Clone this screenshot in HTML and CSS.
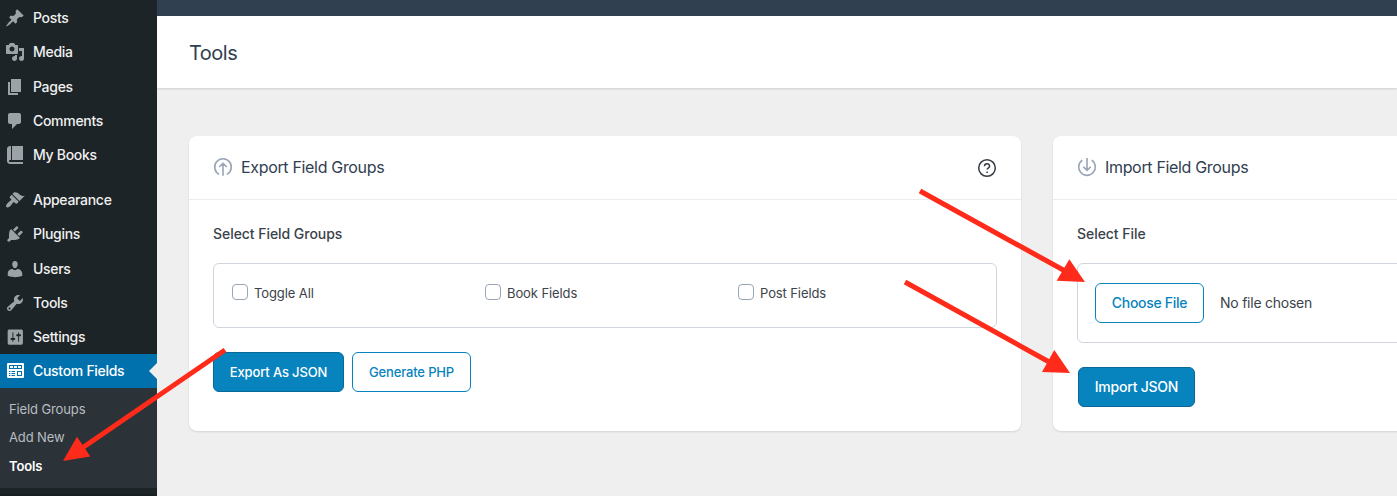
FILE: index.html
```html
<!DOCTYPE html>
<html lang="en">
<head>
<meta charset="utf-8">
<title>Tools</title>
<link rel="stylesheet" href="styles.css">
</head>
<body>
<div class="app">
  <nav class="sidebar">
    <ul class="menu">
      <li class="item"><svg class="icon" viewBox="0 0 20 20"><path d="M10.44 3.02l1.82-1.82 6.36 6.35-1.83 1.82c-1.05-.68-2.48-.57-3.41.36l-.75.75c-.92.93-1.04 2.35-.35 3.41l-1.83 1.82-2.41-2.41-2.8 2.79c-.42.42-3.38 2.71-3.8 2.29s1.86-3.39 2.28-3.81l2.79-2.79L4.1 9.36l1.83-1.82c1.05.69 2.48.57 3.4-.36l.75-.75c.93-.92 1.05-2.35.36-3.41z"/></svg><span>Posts</span></li>
      <li class="item"><svg class="icon" viewBox="0 0 20 20"><path d="M13 11V4c0-.55-.45-1-1-1h-1.67L9 1H5L3.67 3H2c-.55 0-1 .45-1 1v7c0 .55.45 1 1 1h10c.55 0 1-.45 1-1zM7 4.5c1.38 0 2.5 1.12 2.5 2.5S8.38 9.5 7 9.5 4.5 8.38 4.5 7 5.62 4.5 7 4.5zM14 6h5v10.5c0 1.38-1.12 2.5-2.5 2.5S14 17.88 14 16.5s1.12-2.5 2.5-2.5c.17 0 .34.02.5.05V9h-3V6zm-4 8.05V13h2v3.5c0 1.38-1.12 2.5-2.5 2.5S7 17.88 7 16.5 8.12 14 9.5 14c.17 0 .34.02.5.05z"/></svg><span>Media</span></li>
      <li class="item"><svg class="icon" viewBox="0 0 20 20"><path d="M6 15V2h10v13H6zm-1 1h8v2H3V5h2v11z"/></svg><span>Pages</span></li>
      <li class="item"><svg class="icon" viewBox="0 0 20 20"><path d="M5 2h9c1.1 0 2 .9 2 2v7c0 1.1-.9 2-2 2h-2l-5 5v-5H5c-1.1 0-2-.9-2-2V4c0-1.1.9-2 2-2z"/></svg><span>Comments</span></li>
      <li class="item"><svg class="icon" viewBox="0 0 20 20"><path d="M5 1h1v14H4.800c-.5 0-.8.400-.8.900s.3 1.100.8 1.100H18v2H5c-1.660 0-3-1.340-3-3V4c0-1.660 1.340-3 3-3zM7 1h11v14H7z"/></svg><span>My Books</span></li>
    </ul>
    <ul class="menu">
      <li class="item"><svg class="icon" viewBox="0 0 20 20"><path d="M14.48 11.06L7.41 3.99l1.5-1.5c.5-.56 2.3-.47 3.51.32 1.21.8 1.43 1.28 2.91 2.1 1.18.64 2.45 1.26 4.45.85zm-.71.71L6.7 4.7 4.93 6.47c-.39.39-.39 1.02 0 1.41l1.06 1.06c.39.39.39 1.03 0 1.42-.6.6-1.43 1.11-2.21 1.69-.35.26-.7.53-1.01.84C1.43 14.23.4 16.08 1.4 17.07c.99 1 2.84-.03 4.18-1.36.31-.31.58-.66.85-1.02.57-.78 1.08-1.61 1.69-2.21.39-.39 1.02-.39 1.41 0l1.06 1.06c.39.39 1.02.39 1.41 0z"/></svg><span>Appearance</span></li>
      <li class="item"><svg class="icon" viewBox="0 0 20 20"><path d="M13.11 4.36L9.87 7.6 8 5.73l3.24-3.24c.35-.34 1.05-.2 1.56.32.52.51.66 1.21.31 1.55zm-8 1.77l.91-1.12 9.01 9.01-1.19.84c-.71.71-2.63 1.16-3.82 1.16H6.14L4.9 17.26c-.59.59-1.54.59-2.12 0-.59-.58-.59-1.53 0-2.12l1.24-1.24v-3.88c0-1.13.4-3.19 1.09-3.89zm7.26 3.97l3.24-3.24c.34-.35 1.04-.21 1.55.31.52.51.66 1.21.31 1.55l-3.24 3.25z"/></svg><span>Plugins</span></li>
      <li class="item"><svg class="icon" viewBox="0 0 20 20"><path d="M10 9.25c-2.27 0-2.73-3.44-2.73-3.44C7 4.02 7.82 2 9.97 2c2.16 0 2.98 2.02 2.71 3.81 0 0-.41 3.44-2.68 3.44zm0 1.950L12.720 10c2.39 0 4.52 2.33 4.52 4.53v2.49s-3.65 1.13-7.24 1.13c-3.65 0-7.24-1.13-7.24-1.13v-2.49c0-2.25 1.94-4.48 4.47-4.48z"/></svg><span>Users</span></li>
      <li class="item"><svg class="icon" viewBox="0 0 20 20"><path d="M16.68 9.77c-1.34 1.34-3.3 1.67-4.95.99l-5.41 6.52c-.99.99-2.59.99-3.58 0s-.99-2.59 0-3.57l6.52-5.42c-.68-1.65-.35-3.61.99-4.95 1.28-1.28 3.12-1.62 4.72-1.06l-2.89 2.89 2.82 2.82 2.86-2.87c.53 1.58.18 3.39-1.08 4.65zM3.81 16.21c.4.39 1.04.39 1.43 0 .4-.4.4-1.04 0-1.43-.39-.4-1.03-.4-1.43 0-.39.39-.39 1.03 0 1.43z"/></svg><span>Tools</span></li>
      <li class="item"><svg class="icon" viewBox="-.8 -.6 21 21"><path d="M18 16V4c0-1.100-.4-2-1.500-2h-13C2.400 2 2 2.900 2 4v12c0 1.100.4 2 1.500 2h13c1.100 0 1.500-.9 1.500-2zM8 11h1c.55 0 1 .45 1 1s-.45 1-1 1H8v1.500c0 .28-.22.5-.5.5s-.5-.22-.5-.5V13H6c-.55 0-1-.45-1-1s.45-1 1-1h1V5.500c0-.28.22-.5.5-.5s.5.22.5.5V11zm5-2h-1c-.55 0-1-.45-1-1s.45-1 1-1h1V5.500c0-.28.22-.5.5-.5s.5.22.5.5V7h1c.55 0 1 .45 1 1s-.45 1-1 1h-1v5.500c0 .28-.22.5-.5.5s-.5-.22-.5-.5V9z"/></svg><span>Settings</span></li>
      <li class="item item-current"><svg class="icon" viewBox="0 0 20 20"><path fill-rule="evenodd" d="M3 2h15q1 0 1 1v13q0 1-1 1H3q-1 0-1-1V3q0-1 1-1zM4 4v4h13V4zM4 10v1h1.500v-1zM6.500 10v1H10v-1zM4 12v1h1.500v-1zM6.500 12v1H10v-1zM4 14v1h1.500v-1zM6.500 14v1H10v-1zM12 10v5h5v-5z"/><path d="M5 5h3v2H5zM9 5h3v2H9zM13 5h3v2h-3zM13 11h3v3h-3z"/></svg><span>Custom Fields</span></li>
    </ul>
    <ul class="submenu">
      <li>Field Groups</li>
      <li>Add New</li>
      <li class="sub-current">Tools</li>
    </ul>
    <div class="menu-end"></div>
  </nav>
  <main class="main">
    <div class="topbar"></div>
    <header class="page-head"><h1>Tools</h1></header>
    <div class="cards">
      <section class="card">
        <div class="card-head">
          <svg class="head-icon" viewBox="0 0 20 20"><path d="M6.200 17.400A8.300 8.300 0 1 1 13.800 17.400M10 18.800V6.500M6.300 10L10 6.300 13.700 10"/></svg>
          <h2>Export Field Groups</h2>
          <svg class="help" viewBox="0 0 20 20"><circle cx="10" cy="10" r="8.300"/><path d="M7.500 8.200C7.500 4.900 12.600 5 12.600 8c0 2-2.500 2.100-2.500 3.600M10.100 13.400v1.500"/></svg>
        </div>
        <div class="card-body">
          <h3>Select Field Groups</h3>
          <div class="box checks">
            <label><input type="checkbox"><span>Toggle All</span></label>
            <label><input type="checkbox"><span>Book Fields</span></label>
            <label><input type="checkbox"><span>Post Fields</span></label>
          </div>
          <div class="actions"><button class="btn btn-primary btn-export">Export As JSON</button><button class="btn btn-php">Generate PHP</button></div>
        </div>
      </section>
      <section class="card">
        <div class="card-head">
          <svg class="head-icon" viewBox="0 0 20 20"><path d="M5.300 3.200A8.300 8.300 0 1 0 14.700 3.200M10 1v12.300M6.300 9.700L10 13.400 13.700 9.700"/></svg>
          <h2>Import Field Groups</h2>
        </div>
        <div class="card-body">
          <h3>Select File</h3>
          <div class="box file"><button class="btn btn-file">Choose File</button><span class="file-name">No file chosen</span></div>
          <div class="actions actions-import"><button class="btn btn-primary btn-import">Import JSON</button></div>
        </div>
      </section>
    </div>
  </main>
</div>
<svg class="arrows" viewBox="0 0 1397 496">
  <path class="shaft" d="M920 191L1066 271.500M905 282L1051 363M225 350L80 449.500"/>
  <path class="tip" d="M1085 282L1069.300 259.300 1056.700 280.700zM1070 373L1054.300 350 1042 372zM63 461L77 436.700 90.300 456.500z"/>
</svg>
</body>
</html>
```

FILE: styles.css
```css
* { box-sizing: border-box; }
body { margin: 0; font-family: Inter, "Liberation Sans", sans-serif; background: #efefef; overflow: hidden; }
ul, h1, h2, h3 { margin: 0; padding: 0; list-style: none; }
.app { display: flex; height: 496px; overflow: hidden; }
.sidebar { width: 157px; flex: none; background: #1d2427; padding-top: 1.200px; display: flex; flex-direction: column; }
.menu + .menu { margin-top: 11px; }
.item { display: flex; align-items: center; height: 34.200px; padding-left: 5px; gap: 8px; color: #f0f0f1; font-size: 14px; font-weight: 500; letter-spacing: -.3px; line-height: 20px; }
.icon { width: 20px; height: 20px; fill: #9ca2a7; flex: none; }
.item-current { position: relative; height: 34px; background: #0071ad; color: #fff; }
.item-current::after { content: ""; position: absolute; right: 0; top: 9px; border: 8px solid transparent; border-left: 0; border-right-color: #efefef; }
.item-current .icon { fill: #fff; }
.submenu { background: #2c3338; height: 99.800px; padding: 6.800px 0 0 9px; color: #b9bdc1; font-size: 13px; letter-spacing: -.12px; line-height: 28.500px; }
.sub-current { color: #fff; font-weight: 600; }
.menu-end { margin-top: 6px; flex: 1; background: #181e21; }
.main { flex: 1; min-width: 0; overflow: hidden; }
.topbar { height: 16px; background: #304051; }
.page-head { height: 72px; background: #fff; padding: 23px 32px; box-shadow: 0 1px 2px rgba(16,24,40,.15); }
h1 { font-size: 20px; line-height: 28px; font-weight: 400; letter-spacing: -.5px; color: #304051; }
.cards { display: flex; gap: 32px; padding: 48px 0 0 32px; align-items: flex-start; }
.card { flex: none; width: 832px; height: 295px; background: #fff; border-radius: 8px; box-shadow: 0 1px 2px rgba(16,24,40,.12); }
.card-head { height: 64px; border-bottom: 1px solid #eaecf0; display: flex; align-items: center; padding: 0 24px; }
.head-icon { width: 20px; height: 20px; margin: 0 8px 2px 0; fill: none; stroke: #98a5b6; stroke-width: 1.600; }
h2 { font-size: 16px; line-height: 24px; font-weight: 400; letter-spacing: -.33px; color: #304051; flex: 1; margin-bottom: 2px; }
.help { width: 20px; height: 20px; fill: none; stroke: #343c44; stroke-width: 1.500; }
.card-body { padding: 23px 24px 24px; }
h3 { font-size: 14px; line-height: 22px; font-weight: 500; letter-spacing: -.05px; color: #3a424a; }
.box { border: 1px solid #d0d5dd; border-radius: 6px; margin-top: 18px; }
.checks { height: 65px; display: grid; grid-template-columns: repeat(3, 253px); padding: 20px 18px; }
.checks label { display: flex; height: 18px; gap: 6px; font-size: 13px; letter-spacing: -.1px; line-height: 18px; color: #3c434a; }
.checks input { appearance: none; width: 16px; height: 16px; margin: 0; border: 1px solid #98a6b8; border-radius: 4px; background: #fff; }
.actions { display: flex; gap: 8px; margin-top: 24px; }
.btn { height: 40px; padding: 0; border: 1px solid #0783be; border-radius: 6px; background: #fff; color: #0783be; font: 500 13px/20px Inter, "Liberation Sans", sans-serif; letter-spacing: -.15px; white-space: nowrap; }
.btn-primary { background: #0783be; border-color: #066998; color: #fff; }
.btn-export { width: 131px; }
.btn-php { width: 119px; }
.file { height: 80px; padding: 0 17px; display: flex; align-items: center; gap: 16px; font-size: 14px; letter-spacing: -.24px; color: #3c434a; }
.file-name { margin-bottom: 2px; }
.btn-file { width: 109px; font-size: 14px; letter-spacing: -.3px; }
.actions-import { padding-left: 1px; }
.btn-import { width: 117px; font-size: 14px; letter-spacing: -.22px; }
.arrows { position: absolute; left: 0; top: 0; width: 1397px; height: 496px; pointer-events: none; }
.shaft { stroke: #ff2b1a; stroke-width: 5; fill: none; }
.tip { fill: #ff2b1a; }
```
